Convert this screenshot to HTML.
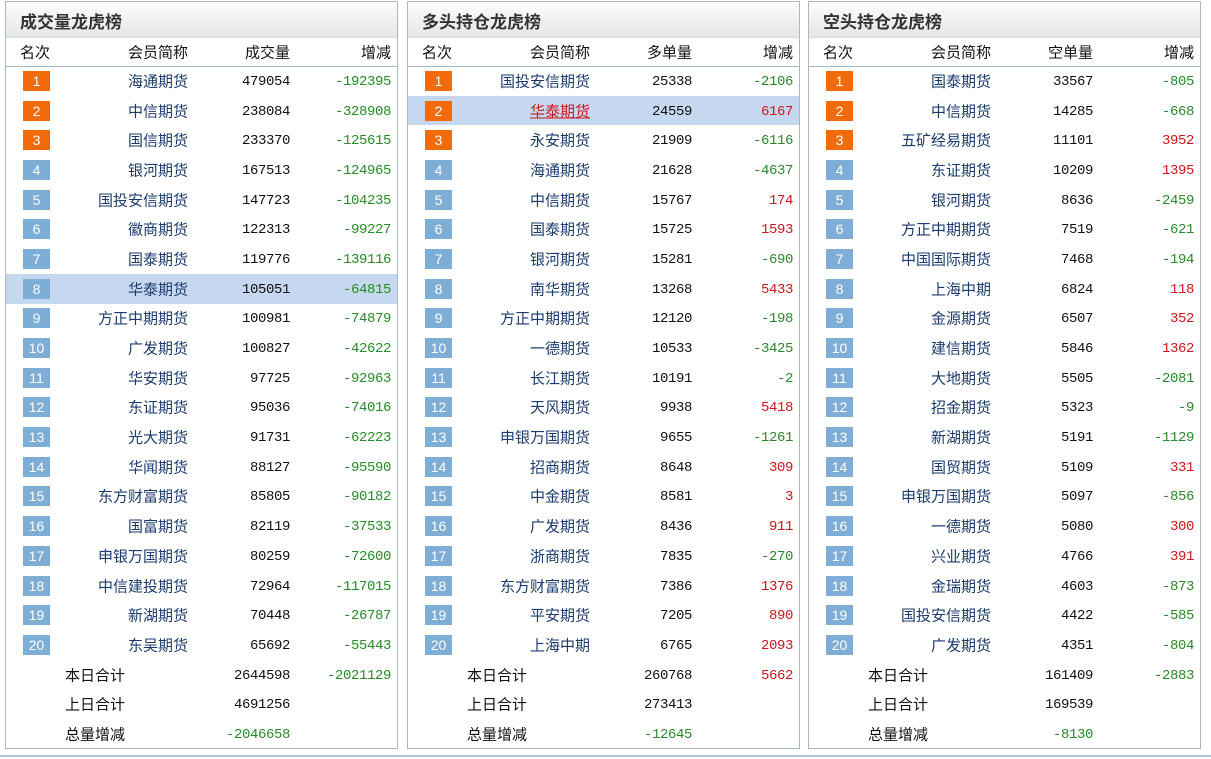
<!DOCTYPE html>
<html><head><meta charset="utf-8"><style>
*{margin:0;padding:0;box-sizing:border-box}
body{width:1211px;height:759px;background:#fff;position:relative;overflow:hidden;font-family:"Liberation Mono","Noto Sans CJK SC",monospace;font-size:14px;color:#111}
.p{position:absolute;top:1px;width:393px;height:748px;border:1px solid #a9b8c6;background:#fff}
.t{height:35px;background:linear-gradient(#fdfdfd,#e6e6e6);font-weight:bold;font-size:17px;color:#333;padding:6px 0 0 14px;font-family:"Noto Sans CJK SC",sans-serif}
.h{height:30px;border-top:1px solid #d5dbe2;border-bottom:1px solid #a9b8c6;position:relative;font-family:"Noto Sans CJK SC",sans-serif;font-size:15px}
.h span,.r span{position:absolute;top:50%;transform:translateY(-50%);white-space:nowrap}
.r{height:29.7px;position:relative;top:-1px}
.r.s{background:#c5d8ef}
.k{left:17px;width:27px;height:20px;background:#7eadd6;color:#fff;text-align:center;line-height:20px;font-size:14px;font-family:"Liberation Sans",sans-serif}
.k.o{background:#f26b0b}
.n{right:209px;color:#1b3b6f;font-family:"Noto Sans CJK SC",sans-serif;font-size:15px}
.n.u{color:#d0161b;text-decoration:underline}
.r span.v{right:107px;letter-spacing:-0.4px;margin-top:1px}
.r span.c{right:6px;letter-spacing:-0.4px;margin-top:1px}
.g{color:#2a8a2a}.d{color:#d0161b}
.l{left:59px;font-family:"Noto Sans CJK SC",sans-serif;font-size:15px}
.f{position:absolute;left:0;top:755px;width:1211px;height:2px;background:#b9c6d2}
</style></head><body>

<div class="p" style="left:5px">
<div class="t">成交量龙虎榜</div>
<div class="h"><span style="left:14px">名次</span><span style="right:209px">会员简称</span><span style="right:107px">成交量</span><span style="right:6px">增减</span></div>
<div class="r"><span class="k o">1</span><span class="n">海通期货</span><span class="v">479054</span><span class="c g">-192395</span></div>
<div class="r"><span class="k o">2</span><span class="n">中信期货</span><span class="v">238084</span><span class="c g">-328908</span></div>
<div class="r"><span class="k o">3</span><span class="n">国信期货</span><span class="v">233370</span><span class="c g">-125615</span></div>
<div class="r"><span class="k">4</span><span class="n">银河期货</span><span class="v">167513</span><span class="c g">-124965</span></div>
<div class="r"><span class="k">5</span><span class="n">国投安信期货</span><span class="v">147723</span><span class="c g">-104235</span></div>
<div class="r"><span class="k">6</span><span class="n">徽商期货</span><span class="v">122313</span><span class="c g">-99227</span></div>
<div class="r"><span class="k">7</span><span class="n">国泰期货</span><span class="v">119776</span><span class="c g">-139116</span></div>
<div class="r s"><span class="k">8</span><span class="n">华泰期货</span><span class="v">105051</span><span class="c g">-64815</span></div>
<div class="r"><span class="k">9</span><span class="n">方正中期期货</span><span class="v">100981</span><span class="c g">-74879</span></div>
<div class="r"><span class="k">10</span><span class="n">广发期货</span><span class="v">100827</span><span class="c g">-42622</span></div>
<div class="r"><span class="k">11</span><span class="n">华安期货</span><span class="v">97725</span><span class="c g">-92963</span></div>
<div class="r"><span class="k">12</span><span class="n">东证期货</span><span class="v">95036</span><span class="c g">-74016</span></div>
<div class="r"><span class="k">13</span><span class="n">光大期货</span><span class="v">91731</span><span class="c g">-62223</span></div>
<div class="r"><span class="k">14</span><span class="n">华闻期货</span><span class="v">88127</span><span class="c g">-95590</span></div>
<div class="r"><span class="k">15</span><span class="n">东方财富期货</span><span class="v">85805</span><span class="c g">-90182</span></div>
<div class="r"><span class="k">16</span><span class="n">国富期货</span><span class="v">82119</span><span class="c g">-37533</span></div>
<div class="r"><span class="k">17</span><span class="n">申银万国期货</span><span class="v">80259</span><span class="c g">-72600</span></div>
<div class="r"><span class="k">18</span><span class="n">中信建投期货</span><span class="v">72964</span><span class="c g">-117015</span></div>
<div class="r"><span class="k">19</span><span class="n">新湖期货</span><span class="v">70448</span><span class="c g">-26787</span></div>
<div class="r"><span class="k">20</span><span class="n">东吴期货</span><span class="v">65692</span><span class="c g">-55443</span></div>
<div class="r"><span class="l">本日合计</span><span class="v">2644598</span><span class="c g">-2021129</span></div>
<div class="r"><span class="l">上日合计</span><span class="v">4691256</span></div>
<div class="r"><span class="l">总量增减</span><span class="v g">-2046658</span></div>
</div>

<div class="p" style="left:407px">
<div class="t">多头持仓龙虎榜</div>
<div class="h"><span style="left:14px">名次</span><span style="right:209px">会员简称</span><span style="right:107px">多单量</span><span style="right:6px">增减</span></div>
<div class="r"><span class="k o">1</span><span class="n">国投安信期货</span><span class="v">25338</span><span class="c g">-2106</span></div>
<div class="r s"><span class="k o">2</span><span class="n u">华泰期货</span><span class="v">24559</span><span class="c d">6167</span></div>
<div class="r"><span class="k o">3</span><span class="n">永安期货</span><span class="v">21909</span><span class="c g">-6116</span></div>
<div class="r"><span class="k">4</span><span class="n">海通期货</span><span class="v">21628</span><span class="c g">-4637</span></div>
<div class="r"><span class="k">5</span><span class="n">中信期货</span><span class="v">15767</span><span class="c d">174</span></div>
<div class="r"><span class="k">6</span><span class="n">国泰期货</span><span class="v">15725</span><span class="c d">1593</span></div>
<div class="r"><span class="k">7</span><span class="n">银河期货</span><span class="v">15281</span><span class="c g">-690</span></div>
<div class="r"><span class="k">8</span><span class="n">南华期货</span><span class="v">13268</span><span class="c d">5433</span></div>
<div class="r"><span class="k">9</span><span class="n">方正中期期货</span><span class="v">12120</span><span class="c g">-198</span></div>
<div class="r"><span class="k">10</span><span class="n">一德期货</span><span class="v">10533</span><span class="c g">-3425</span></div>
<div class="r"><span class="k">11</span><span class="n">长江期货</span><span class="v">10191</span><span class="c g">-2</span></div>
<div class="r"><span class="k">12</span><span class="n">天风期货</span><span class="v">9938</span><span class="c d">5418</span></div>
<div class="r"><span class="k">13</span><span class="n">申银万国期货</span><span class="v">9655</span><span class="c g">-1261</span></div>
<div class="r"><span class="k">14</span><span class="n">招商期货</span><span class="v">8648</span><span class="c d">309</span></div>
<div class="r"><span class="k">15</span><span class="n">中金期货</span><span class="v">8581</span><span class="c d">3</span></div>
<div class="r"><span class="k">16</span><span class="n">广发期货</span><span class="v">8436</span><span class="c d">911</span></div>
<div class="r"><span class="k">17</span><span class="n">浙商期货</span><span class="v">7835</span><span class="c g">-270</span></div>
<div class="r"><span class="k">18</span><span class="n">东方财富期货</span><span class="v">7386</span><span class="c d">1376</span></div>
<div class="r"><span class="k">19</span><span class="n">平安期货</span><span class="v">7205</span><span class="c d">890</span></div>
<div class="r"><span class="k">20</span><span class="n">上海中期</span><span class="v">6765</span><span class="c d">2093</span></div>
<div class="r"><span class="l">本日合计</span><span class="v">260768</span><span class="c d">5662</span></div>
<div class="r"><span class="l">上日合计</span><span class="v">273413</span></div>
<div class="r"><span class="l">总量增减</span><span class="v g">-12645</span></div>
</div>

<div class="p" style="left:808px">
<div class="t">空头持仓龙虎榜</div>
<div class="h"><span style="left:14px">名次</span><span style="right:209px">会员简称</span><span style="right:107px">空单量</span><span style="right:6px">增减</span></div>
<div class="r"><span class="k o">1</span><span class="n">国泰期货</span><span class="v">33567</span><span class="c g">-805</span></div>
<div class="r"><span class="k o">2</span><span class="n">中信期货</span><span class="v">14285</span><span class="c g">-668</span></div>
<div class="r"><span class="k o">3</span><span class="n">五矿经易期货</span><span class="v">11101</span><span class="c d">3952</span></div>
<div class="r"><span class="k">4</span><span class="n">东证期货</span><span class="v">10209</span><span class="c d">1395</span></div>
<div class="r"><span class="k">5</span><span class="n">银河期货</span><span class="v">8636</span><span class="c g">-2459</span></div>
<div class="r"><span class="k">6</span><span class="n">方正中期期货</span><span class="v">7519</span><span class="c g">-621</span></div>
<div class="r"><span class="k">7</span><span class="n">中国国际期货</span><span class="v">7468</span><span class="c g">-194</span></div>
<div class="r"><span class="k">8</span><span class="n">上海中期</span><span class="v">6824</span><span class="c d">118</span></div>
<div class="r"><span class="k">9</span><span class="n">金源期货</span><span class="v">6507</span><span class="c d">352</span></div>
<div class="r"><span class="k">10</span><span class="n">建信期货</span><span class="v">5846</span><span class="c d">1362</span></div>
<div class="r"><span class="k">11</span><span class="n">大地期货</span><span class="v">5505</span><span class="c g">-2081</span></div>
<div class="r"><span class="k">12</span><span class="n">招金期货</span><span class="v">5323</span><span class="c g">-9</span></div>
<div class="r"><span class="k">13</span><span class="n">新湖期货</span><span class="v">5191</span><span class="c g">-1129</span></div>
<div class="r"><span class="k">14</span><span class="n">国贸期货</span><span class="v">5109</span><span class="c d">331</span></div>
<div class="r"><span class="k">15</span><span class="n">申银万国期货</span><span class="v">5097</span><span class="c g">-856</span></div>
<div class="r"><span class="k">16</span><span class="n">一德期货</span><span class="v">5080</span><span class="c d">300</span></div>
<div class="r"><span class="k">17</span><span class="n">兴业期货</span><span class="v">4766</span><span class="c d">391</span></div>
<div class="r"><span class="k">18</span><span class="n">金瑞期货</span><span class="v">4603</span><span class="c g">-873</span></div>
<div class="r"><span class="k">19</span><span class="n">国投安信期货</span><span class="v">4422</span><span class="c g">-585</span></div>
<div class="r"><span class="k">20</span><span class="n">广发期货</span><span class="v">4351</span><span class="c g">-804</span></div>
<div class="r"><span class="l">本日合计</span><span class="v">161409</span><span class="c g">-2883</span></div>
<div class="r"><span class="l">上日合计</span><span class="v">169539</span></div>
<div class="r"><span class="l">总量增减</span><span class="v g">-8130</span></div>
</div>

<div class="f"></div>
</body></html>
